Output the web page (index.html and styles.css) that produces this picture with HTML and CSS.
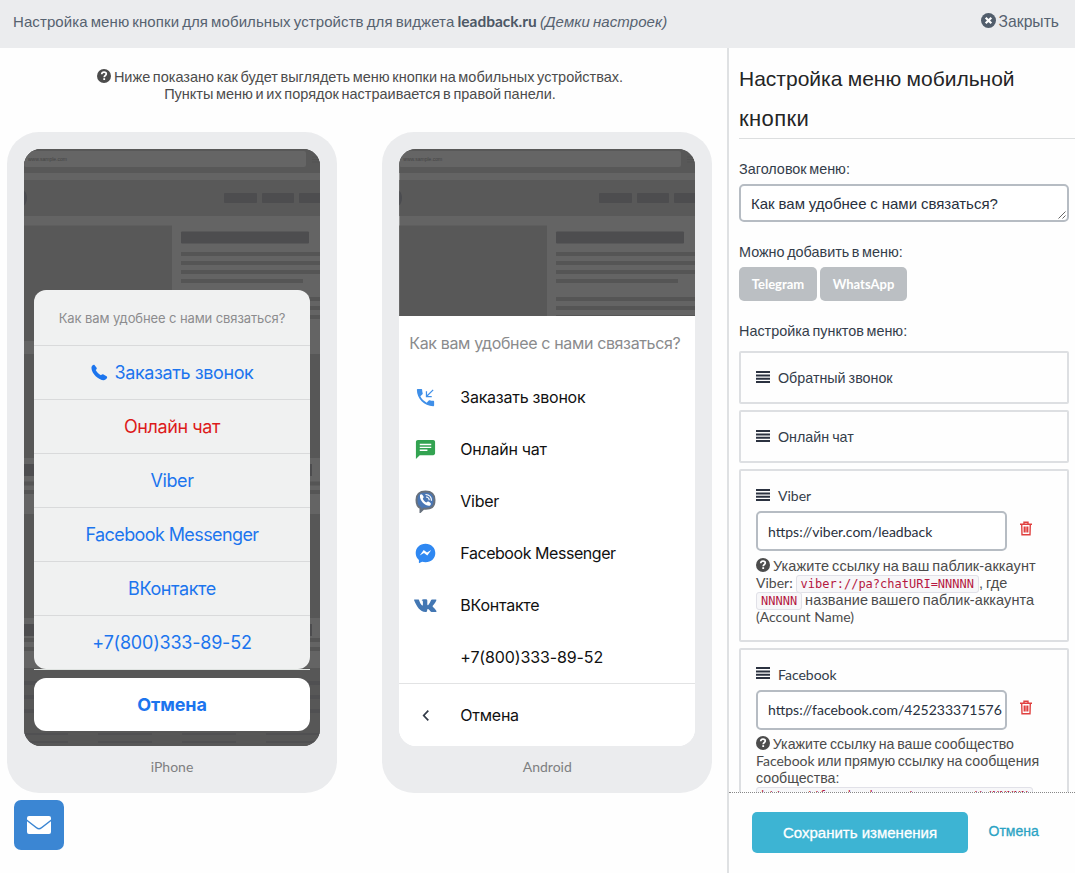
FILE: index.html
```html
<!DOCTYPE html>
<html lang="ru">
<head>
<meta charset="utf-8">
<title>Настройка меню мобильной кнопки</title>
<link rel="stylesheet" href="styles.css">
</head>
<body>
<svg class="defs" aria-hidden="true">
  <symbol id="site" viewBox="0 0 296 597">
    <rect width="296" height="597" fill="#646464"/>
    <rect width="296" height="24" fill="#585858"/>
    <rect y="2" width="282" height="16" rx="2" fill="#656565"/>
    <path d="M288 8h8M288 10.500h8M288 13h8" stroke="#525252"/>
    <rect y="31" width="296" height="36" fill="#595959"/>
    <ellipse cx="-2" cy="49" rx="5" ry="8" fill="#4b4c50"/>
    <g fill="#4d4d4f"><rect x="200" y="44" width="33" height="10" rx="1"/><rect x="238" y="44" width="32" height="10" rx="1"/><rect x="275" y="44" width="32" height="10" rx="1"/><rect x="157" y="82.500" width="128" height="12" rx="1"/></g>
    <rect y="76.500" width="148" height="90" fill="#585858"/>
    <g fill="#555"><rect x="157" y="103" width="150" height="4"/><rect x="157" y="112" width="150" height="4"/><rect x="157" y="121" width="150" height="4"/><rect x="157" y="130" width="122" height="4"/><rect x="157" y="148" width="150" height="4"/><rect x="157" y="157" width="150" height="4"/><rect x="157" y="166" width="150" height="4"/></g>
    <rect y="166" width="148" height="26" fill="#585858"/>
    <rect y="205" width="296" height="104" fill="#575757"/>
    <rect y="315" width="288" height="12" fill="#4d4d4f"/>
    <path d="M0 334.500h296M0 343h296" stroke="#555" stroke-width="4"/>
    <rect y="365" width="296" height="104" fill="#575757"/>
    <rect y="475" width="288" height="12" fill="#4d4d4f"/>
    <path d="M0 491h296M0 500h296" stroke="#555" stroke-width="4"/>
    <rect y="519" width="296" height="78" fill="#575757"/>
    <path d="M0 534h296M0 548h296M0 562h296" stroke="#505052" stroke-width="4"/>
    <path d="M0 585h44M74 585h54M158 585h54M242 585h54M0 593h44M74 593h54M158 593h54M242 593h54" stroke="#505052" stroke-width="2"/>
  </symbol>
  <symbol id="help" viewBox="0 0 14 14"><circle cx="7" cy="7" r="7" fill="#4c4c4c"/><path d="M4.700 5.300C4.800 3.800 5.700 3.200 7 3.200c1.400 0 2.300.8 2.300 1.900C9.300 6.500 7.200 6.600 7.200 8.300" fill="none" stroke="#fff" stroke-width="1.700"/><rect x="6.300" y="9.200" width="1.800" height="1.800" fill="#fff"/></symbol>
  <symbol id="bars" viewBox="0 0 14 12"><path d="M0 1h14M0 4.400h14M0 7.700h14M0 11h14" stroke="#2b3240" stroke-width="2"/></symbol>
  <symbol id="trash" viewBox="0 0 14 15"><path d="M1 3.200h12M5 3V1.300h4V3M2.700 3.200l.3 10.600h8l.3-10.600M5.300 5.500v6M7 5.500v6M8.700 5.500v6" fill="none" stroke="#e0403f" stroke-width="1.400"/></symbol>
</svg>

<header class="topbar">
  <div class="topbar-title">Настройка меню кнопки для мобильных устройств для виджета <b class="lat">leadback.ru</b> <i>(Демки настроек)</i></div>
  <div class="close"><svg width="15" height="15" viewBox="0 0 15 15"><circle cx="7.500" cy="7.500" r="7.500" fill="#525e6c"/><path d="M4.700 4.700l5.600 5.600M10.300 4.700l-5.600 5.600" stroke="#fff" stroke-width="2.200"/></svg><span>Закрыть</span></div>
</header>

<div class="layout">
  <main class="preview">
    <div class="intro">
      <div class="intro-row"><svg class="help" width="14" height="14"><use href="#help"/></svg><span>Ниже показано как будет выглядеть меню кнопки на мобильных устройствах.</span></div>
      <div class="intro-row"><span>Пункты меню и их порядок настраивается в правой панели.</span></div>
    </div>
    <div class="phones">
      <section class="phone">
        <div class="screen ios">
          <svg class="site" viewBox="0 0 296 597"><use href="#site"/></svg><span class="url">www.sample.com</span>
          <div class="sheet">
            <div class="sheet-title"><span>Как вам удобнее с нами связаться?</span></div>
            <div class="sheet-item"><svg width="17" height="17" viewBox="0 0 17 17"><path d="M.6 2.800C1.200 1.300 2.500.3 3.300.8l2.300 3c.5.8 0 1.500-.9 2.300 1 2.100 3.100 4 5.300 5.100.8-1 1.700-1.300 2.500-.8l3.400 2.200c1 1-1 3.300-3 3.700C7.500 16.500-.7 8.500.6 2.800z" fill="#1c75ee"/></svg><span>Заказать звонок</span></div>
            <div class="sheet-item red"><span>Онлайн чат</span></div>
            <div class="sheet-item"><span>Viber</span></div>
            <div class="sheet-item latin"><span>Facebook Messenger</span></div>
            <div class="sheet-item"><span>ВКонтакте</span></div>
            <div class="sheet-item num"><span>+7(800)333-89-52</span></div>
          </div>
          <div class="sheet-line"></div>
          <div class="cancel"><span>Отмена</span></div>
        </div>
        <div class="phone-name"><span>iPhone</span></div>
      </section>
      <section class="phone">
        <div class="screen android">
          <svg class="site" viewBox="0 0 296 597"><use href="#site"/></svg><span class="url">www.sample.com</span>
          <div class="drawer">
            <div class="drawer-title"><span>Как вам удобнее с нами связаться?</span></div>
            <div class="drawer-item"><svg width="23" height="23" viewBox="0 0 24 24" fill="#3f8fe8"><path d="M20 15.500c-1.250 0-2.450-.2-3.570-.57-.35-.11-.74-.03-1.020.24l-2.200 2.200c-2.830-1.440-5.150-3.750-6.590-6.580l2.200-2.210c.28-.27.36-.66.25-1.010C8.700 6.450 8.500 5.250 8.500 4c0-.55-.45-1-1-1H4c-.55 0-1 .45-1 1 0 9.390 7.610 17 17 17 .55 0 1-.45 1-1v-3.500c0-.55-.45-1-1-1z"/><path d="M20 4l-6.500 6.500M13 5.500V11h5.500" fill="none" stroke="#3f8fe8" stroke-width="1.300"/></svg><span>Заказать звонок</span></div>
            <div class="drawer-item"><svg width="23" height="23" viewBox="0 0 24 24" fill="#33a351"><path d="M20 2H4c-1.100 0-1.990.9-1.990 2L2 22l4-4h14c1.100 0 2-.9 2-2V4c0-1.100-.9-2-2-2z"/><path d="M6 6.800h12M6 9.800h12M6 12.800h8" stroke="#fff" stroke-width="1.500"/></svg><span>Онлайн чат</span></div>
            <div class="drawer-item"><svg width="23" height="23" viewBox="0 0 23 23"><path d="M11.500 1.500C5 1.500 2.500 4 2.500 10c0 4.500 1.500 7 4 8v3.700l3.200-3.100c7.800.6 10.800-1.600 10.800-8.600 0-6-2.500-8.500-9-8.500z" fill="#4a77b5" stroke="#68717d" stroke-width="2"/><path d="M6 5c1.200-1.200 2.200-.8 3.500 1.600.4.900-.2 1.400-.7 2.100.8 1.900 2 3 3.700 3.800.8-1 1.400-1.200 2.400-.7 2.400 1.400 2.500 2.300 1.200 3.600C13.900 17.300 5 12 6 5z" fill="#fff"/><path d="M11.500 4.500c4.200.2 6 2.200 6 6.300M12 7c2.200.2 3.200 1.300 3.200 3.300" fill="none" stroke="#fff" stroke-width="1.200"/></svg><span>Viber</span></div>
            <div class="drawer-item latin"><svg width="23" height="23" viewBox="0 0 23 23"><path d="M11.500 1.700c-5.700 0-9.800 4-9.800 9.300 0 2.900 1.200 5.200 3.200 6.900v3.300l3.200-1.400c1.100.3 2.200.5 3.400.5 5.700 0 9.800-4 9.800-9.300s-4.100-9.300-9.800-9.300z" fill="#2f88f2"/><path d="M5.700 13.500l4-5.500 3.300 2.400 4.300-2.400-4 5.500-3.300-2.400z" fill="#fff"/></svg><span>Facebook Messenger</span></div>
            <div class="drawer-item"><svg width="23" height="23" viewBox="0 0 23 23" fill="#4377b3"><path d="M.6 5.500h3.600c.7 0 .8.300 1 .9.800 2.200 2 4.600 3 5 .6 0 .7-.4.700-1V8c0-1.200-.4-1.400-1.300-1.800.5-.7 1.500-.9 3.200-.9 2.200 0 2.500.4 2.500 1.600v3.700c.1.700.5.8 1 .4 1.200-1.300 2-3 2.700-4.700.2-.6.500-.8 1.100-.8h3.400c1 0 1 .5.700 1.200-.7 1.700-2 3.300-3.300 4.900-.5.700-.4.900.1 1.500 1.200 1.100 2.500 2.300 3.300 3.600.5.900.1 1.400-.8 1.400h-3.300c-1.100 0-1.400-.4-2-1.100-.8-.9-1.400-1.700-2.200-1.900-.6-.1-.7.300-.8.900-.1 1.500-.3 2-1.600 2C5.800 18 2.900 12.200.2 6.500c-.2-.6-.1-1 .4-1z"/></svg><span>ВКонтакте</span></div>
            <div class="drawer-item num"><i class="noicon"></i><span>+7(800)333-89-52</span></div>
            <div class="drawer-item back"><svg width="23" height="23" viewBox="0 0 23 23"><path d="M14.300 6.700l-4.600 4.800 4.600 4.800" fill="none" stroke="#333b48" stroke-width="1.700"/></svg><span>Отмена</span></div>
          </div>
        </div>
        <div class="phone-name"><span>Android</span></div>
      </section>
    </div>
    <div class="mail"><svg width="24" height="18" viewBox="0 0 24 18"><path d="M2 0h20a2 2 0 0 1 2 2v1.600c-3 2.600-6.500 5-9.700 7.500-1.800 1.300-2.800 1.300-4.600 0C6.500 8.600 3 6.200 0 3.600V2a2 2 0 0 1 2-2zM0 5.300c3 2.400 6 4.700 9 7 2.200 1.700 3.800 1.700 6 0 3-2.300 6-4.600 9-7V16a2 2 0 0 1-2 2H2a2 2 0 0 1-2-2z" fill="#fff"/></svg></div>
  </main>

  <aside class="panel">
    <div class="panel-scroll">
      <h1 class="panel-title">Настройка меню мобильной<br><span class="wide">кнопки</span></h1>
      <label class="label">Заголовок меню:</label>
      <div class="field area"><span>Как вам удобнее с нами связаться?</span><svg class="grip" width="8" height="8" viewBox="0 0 8 8"><path d="M.5 7.500l7-7M4.500 7.500l3-3" stroke="#555" stroke-width=".9"/></svg></div>
      <label class="label">Можно добавить в меню:</label>
      <div class="tags"><button class="tag">Telegram</button><button class="tag wa">WhatsApp</button></div>
      <label class="label">Настройка пунктов меню:</label>
      <div class="cards">
        <div class="card"><div class="card-head"><svg width="14" height="12"><use href="#bars"/></svg><span>Обратный звонок</span></div></div>
        <div class="card"><div class="card-head"><svg width="14" height="12"><use href="#bars"/></svg><span>Онлайн чат</span></div></div>
        <div class="card tall">
          <div class="card-head lat"><svg width="14" height="12"><use href="#bars"/></svg><span>Viber</span></div>
          <div class="field-row"><div class="field lat"><span>https://viber.com/leadback</span></div><svg width="14" height="15"><use href="#trash"/></svg></div>
          <div class="hint loose">
            <div><svg class="help" width="14" height="14"><use href="#help"/></svg> Укажите ссылку на ваш паблик-аккаунт</div>
            <div><span class="lat">Viber:</span> <code>viber://pa?chatURI=NNNNN</code>, где</div>
            <div><code>NNNNN</code> название вашего паблик-аккаунта</div>
            <div class="lat">(Account Name)</div>
          </div>
        </div>
        <div class="card tall">
          <div class="card-head lat"><svg width="14" height="12"><use href="#bars"/></svg><span>Facebook</span></div>
          <div class="field-row"><div class="field lat"><span>https://facebook.com/425233371576</span></div><svg width="14" height="15"><use href="#trash"/></svg></div>
          <div class="hint">
            <div><svg class="help" width="14" height="14"><use href="#help"/></svg> Укажите ссылку на ваше сообщество</div>
            <div><span class="lat">Facebook</span> или прямую ссылку на сообщения</div>
            <div>сообщества:</div>
            <div><code>https://facebook.com/messages/t/NNNNN</code></div>
          </div>
        </div>
      </div>
    </div>
    <footer class="actions"><button class="save">Сохранить изменения</button><a class="link">Отмена</a></footer>
  </aside>
</div>
</body>
</html>
```
FILE: styles.css
```css
* { box-sizing: border-box; }
body { margin: 0; width: 1075px; height: 873px; overflow: hidden; background: #fefefe; font-family: "Liberation Sans", Arial, sans-serif; font-size: 14px; color: #4c4c4c; }
svg { display: block; flex: none; }
span { white-space: nowrap; }
.defs { position: absolute; width: 0; height: 0; }
.lat { font-family: Lato, sans-serif; letter-spacing: 0; word-spacing: 0; }
button { border: 0; padding: 0; font: inherit; }

.topbar { height: 48px; padding: 0 16px 4px 13px; display: flex; align-items: center; justify-content: space-between; background: #ebecee; color: #566270; font-size: 15px; }
.topbar-title { word-spacing: -1.200px; letter-spacing: .09px; white-space: nowrap; line-height: 18px; }
.topbar-title b { color: #4d5866; font-size: 15.500px; line-height: 1; }
.close { display: flex; align-items: center; gap: 3px; font-size: 15.700px; line-height: 18px; }
.close svg { margin-bottom: 4px; }

.layout { display: flex; height: 825px; }
.preview { width: 727px; padding-left: 7px; }
.intro { padding-top: 21px; height: 84px; line-height: 17px; width: 706px; font-size: 14.500px; word-spacing: -1.400px; }
.intro-row { display: flex; justify-content: center; gap: 3px; }
.phones { display: flex; gap: 45.300px; }
.phone { width: 330px; height: 661px; padding: 17px; border-radius: 32px; background: #ebecee; }
.screen { position: relative; width: 296px; height: 597px; border-radius: 17px; overflow: hidden; display: flex; flex-direction: column; font-family: Inter, sans-serif; }
.site { position: absolute; left: 0; top: 0; width: 296px; height: 597px; }
.url { position: absolute; left: 4px; top: 8px; font: 5px/5px "Liberation Sans", sans-serif; color: #444; }
.ios { padding: 141px 10px 0; background: #5a5a5a; }
.sheet { position: relative; height: 379px; border-radius: 12px; background: #f0f1f1; overflow: hidden; }
.sheet-title, .sheet-item { height: 54px; display: flex; align-items: center; justify-content: center; }
.sheet-title { height: 54.600px; padding-top: 1px; font-size: 13px; letter-spacing: -.1px; color: #8c8c8e; }
.sheet-item { gap: 7px; border-top: 1px solid #d9dadb; font-size: 18px; letter-spacing: -.4px; color: #1c75ee; }
.sheet-item.latin { letter-spacing: -.6px; }
.sheet-item.num { letter-spacing: -.22px; }
.sheet-item.red { color: #dd1b1b; }
.sheet-line { position: relative; height: 1px; background: #dfe3e0; }
.cancel { position: relative; margin-top: 8px; height: 53px; border-radius: 12px; background: #fff; display: flex; align-items: center; justify-content: center; font-size: 18px; font-weight: 700; letter-spacing: -.1px; color: #1c75ee; }
.phone-name { height: 44px; text-align: center; font: 14px/42px Lato, sans-serif; color: #7e7f81; }

.android { padding-top: 167px; background: #fff; }
.android .site { clip-path: inset(0 0 430px 0); }
.drawer { position: relative; height: 430px; background: #fff; font-size: 16px; letter-spacing: -.25px; color: #111; }
.drawer-title { height: 55px; line-height: 54px; padding-left: 10px; letter-spacing: -.36px; color: #8a8b8d; }
.drawer-item { height: 52px; padding-left: 15px; display: flex; align-items: center; gap: 23px; }
.drawer-item.latin { letter-spacing: -.45px; }
.drawer-item.num { letter-spacing: -.12px; }
.noicon { width: 23px; }
.drawer-item.back { height: 63px; border-top: 1px solid #e2e3e4; }
.mail { width: 50px; height: 50px; margin: 7px 0 0 7px; border-radius: 7px; background: #3b86d3; display: flex; align-items: center; justify-content: center; }

.panel { width: 348px; border-left: 2px solid #dfe1e3; color: #343d4a; }
.panel-scroll { height: 744px; overflow: hidden; padding-left: 10px; }
.panel-title { margin: 0; padding-top: 11px; height: 91px; font-size: 21px; line-height: 40px; font-weight: 400; word-spacing: -.5px; color: #242526; border-bottom: 1px solid #dcdedf; }
.wide { font-size: 22px; letter-spacing: .4px; }
.label { display: block; padding-top: 22px; line-height: 17px; font-size: 14.400px; word-spacing: -1.400px; }
.field { border: 2px solid #b6bcc3; border-radius: 5px; background: #fff; display: flex; align-items: center; overflow: hidden; color: #28303d; }
.area { position: relative; margin-top: 6px; width: 330px; height: 38px; padding-left: 10px; font-size: 15px; word-spacing: -.3px; }
.grip { position: absolute; right: 1px; bottom: 1px; }
.tags { display: flex; gap: 3px; margin-top: 6px; }
.tag { width: 78px; height: 34px; border-radius: 5px; background: #bbbfc3; color: #fff; font: 700 13px Lato, sans-serif; }
.tag.wa { width: 87px; }
.cards { margin-top: 11px; display: flex; flex-direction: column; gap: 6px; width: 330px; }
.card { height: 53px; border: 2px solid #dddfe2; border-radius: 2px; padding: 15px 15px 0; }
.card.tall { height: 172.500px; flex: none; }
.card-head { display: flex; align-items: center; gap: 8px; height: 19px; font-size: 14.300px; word-spacing: -1px; }
.card-head.lat { font-size: 14px; }
.card-head svg { margin-bottom: 2px; }
.field-row { display: flex; gap: 12px; margin-top: 6px; }
.field-row .field { width: 251px; height: 40px; padding: 0 2px 0 10px; font-size: 14px; }
.field-row svg { margin-top: 10px; }
.hint { padding-top: 6.500px; font-size: 14.200px; line-height: 17px; color: #4c4c4c; white-space: nowrap; word-spacing: -1.200px; }
.hint.loose { padding-top: 7px; font-size: 14.500px; letter-spacing: .09px; }
.hint > div { height: 17px; }
.hint .lat { font-size: 14px; line-height: 16px; letter-spacing: 0; word-spacing: 0; }
.hint .help { display: inline-block; vertical-align: -1px; }
code { padding: 1px 4px; border: 1px solid #e1e1e8; border-radius: 3px; background: #f7f7f9; color: #b5173f; font: 12px/12px "DejaVu Sans Mono", monospace; letter-spacing: 0; }
.actions { height: 81px; border-top: 1px dotted #888; display: flex; align-items: flex-start; padding: 19px 0 0 23px; gap: 20.500px; background: #fefefe; }
.save { width: 216px; height: 41px; border-radius: 5px; background: #3db4d3; color: #fff; font-size: 15px; -webkit-text-stroke: .3px #fff; }
.link { color: #2ba3c4; line-height: 38px; -webkit-text-stroke: .3px #2ba3c4; }
```
